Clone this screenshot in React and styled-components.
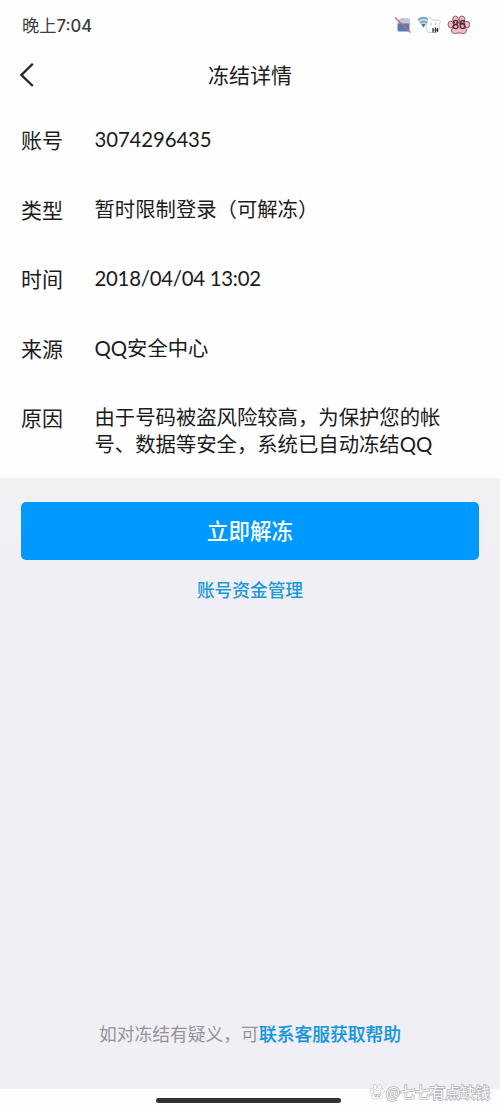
import React from "react";
import styled, { createGlobalStyle } from "styled-components";

const GlobalStyle = createGlobalStyle`
  * { box-sizing: border-box; }
  body {
    margin: 0;
    background: #fff;
    font-family: "Noto Sans CJK SC", sans-serif;
    color: #1b1b1b;
  }
`;

const Screen = styled.div`
  width: 500px;
  height: 1111px;
  display: flex;
  flex-direction: column;
  overflow: hidden;
  background: #fefefe;
`;

const StatusBar = styled.header`
  height: 50px;
  padding: 0 29px 0 22px;
  display: flex;
  align-items: center;
  justify-content: space-between;
`;

const Clock = styled.time`
  font-family: "Noto Sans CJK SC", sans-serif;
  font-size: 17.3px;
  font-weight: 400;
  line-height: 24px;
  color: #3c3c3c;
  white-space: nowrap;
`;

const ClockDigits = styled.span`
  font-family: "Inter", sans-serif;
  font-size: 16.6px;
  font-weight: 500;
`;

const StatusIcons = styled.div`
  display: flex;
  align-items: center;
  gap: 5px;
`;

const TitleBar = styled.nav`
  height: 50px;
  padding: 0 20px;
  display: grid;
  grid-template-columns: 30px 1fr 30px;
  align-items: center;
`;

const BackButton = styled.button`
  display: flex;
  padding: 0;
  border: 0;
  background: none;
`;

const Title = styled.h1`
  margin: 0;
  padding-bottom: 2px;
  text-align: center;
  font-size: 21px;
  font-weight: 400;
  line-height: 30px;
`;

const Details = styled.dl`
  margin: 0;
  padding: 24px 21px 20px;
  height: 378px;
  display: flex;
  flex-direction: column;
  gap: 39.5px;
`;

const DetailRow = styled.div`
  display: grid;
  grid-template-columns: 73.5px 1fr;
`;

const Label = styled.dt`
  font-size: 21px;
  line-height: 30px;
`;

const Value = styled.dd`
  margin: 0;
  padding-top: ${(p) => (p.$numeric ? "2px" : "1px")};
  font-family: ${(p) => (p.$numeric ? '"Lato", ' : "")}"Noto Sans CJK SC", sans-serif;
  font-size: 20.35px;
  line-height: 27px;
  letter-spacing: ${(p) => p.$spacing || "0"};
  white-space: nowrap;
`;

const Latin = styled.span`
  font-family: "Lato", sans-serif;
`;

const Actions = styled.main`
  flex: 1;
  display: flex;
  flex-direction: column;
  align-items: center;
  padding: 24px 21px 0;
  background: linear-gradient(#f1f1f2 0, #f1f1f3 24px, #f1eff6 82px);
`;

const PrimaryButton = styled.button`
  width: 100%;
  height: 58px;
  padding: 0 0 3px;
  border: 0;
  border-radius: 5px;
  background: #0099ff;
  color: #fff;
  font-family: inherit;
  font-size: 21.5px;
  font-weight: 500;
`;

const FundsLink = styled.a`
  margin-top: 16px;
  font-size: 17.7px;
  font-weight: 500;
  line-height: 26px;
  color: #1b98d8;
`;

const Help = styled.p`
  margin: auto 0 43px;
  font-size: 17.75px;
  line-height: 26px;
  color: #96949b;
  white-space: nowrap;
`;

const HelpLink = styled.a`
  font-weight: 500;
  -webkit-text-stroke: 0.2px currentColor;
  color: #1496dc;
`;

const GestureArea = styled.footer`
  position: relative;
  height: 22px;
  display: flex;
  justify-content: center;
  padding: 9px 3px 0 0;
`;

const HomeBar = styled.div`
  width: 185px;
  height: 5px;
  border-radius: 3px;
  background: #333;
`;

const Watermark = styled.div`
  position: absolute;
  right: 10px;
  bottom: 9px;
  display: flex;
  align-items: center;
  gap: 1px;
  font-size: 15px;
  line-height: 20px;
  color: #f8f7fa;
  -webkit-text-stroke: 1.8px #bcbbbf;
  paint-order: stroke fill;
  white-space: nowrap;
`;

const SimIcon = () => (
  <svg width="19" height="18" viewBox="0 0 19 18">
    <path d="M5 5l3-3h7q2 0 2 2v4H5z" fill="#c8c9cd" />
    <path d="M4.500 7.500h12v6.500q0 1.500-1.500 1.500H6q-1.500 0-1.500-1.500z" fill="#597baf" />
    <path d="M2 1.500l15.500 15" stroke="#b66c79" strokeWidth="1.300" />
  </svg>
);

const WifiIcon = () => (
  <svg width="25" height="20" viewBox="0 0 25 20">
    <path d="M1 5.500q5-4.500 10.500-.5L6.500 12z" fill="#cfe0ea" />
    <path d="M1 5q5.500-4.500 11 0M3 8q3.500-3 7 0" fill="none" stroke="#76a6c5" strokeWidth="1.800" />
    <path d="M4.500 9.500q2-1.500 4 0l-2 3z" fill="#2874ad" />
    <path d="M10.500 8q-.5-6 1.500-6 2 .5 3 3 2-.5 4 .5 2-1.500 4 0 1 2.500-1 4 1 3-.5 6l-2 2h-8q-3-2-2.500-5.500-.5-2 1.500-4z" fill="#fff" stroke="#c4c2c2" strokeWidth=".8" />
    <path d="M13.500 9h1.300M18 9h1.200" stroke="#777" />
    <path d="M16 13v4.500M18.500 12.500v5M15.500 15h2M18 15h3M20.500 13v4" stroke="#333" strokeWidth="1.200" />
  </svg>
);

const PawBattery = () => (
  <svg width="24" height="20" viewBox="0 0 24 20">
    <g fill="#f5bcc7" stroke="#8b5963" strokeWidth="1">
      <ellipse cx="3.800" cy="9.500" rx="2.700" ry="3.300" />
      <ellipse cx="8.500" cy="4.500" rx="2.800" ry="3.500" />
      <ellipse cx="15" cy="4.500" rx="2.800" ry="3.500" />
      <ellipse cx="20" cy="9.500" rx="2.700" ry="3.300" />
      <path d="M4.500 15q1-4 4.500-6.500 3-2 6 0 3.500 2.500 4.500 6.500-.5 4-4 3.500-3.500-1.500-7 0-4 .500-4-3.500z" />
    </g>
    <text x="12" y="14.200" textAnchor="middle" fontFamily="Liberation Sans, sans-serif" fontSize="12" fill="#3e2027" stroke="#3e2027" strokeWidth=".3">86</text>
  </svg>
);

const BackIcon = () => (
  <svg width="15" height="26" viewBox="0 0 15 26" fill="none">
    <path d="M12.800 1.800L1.500 13l11.300 11" stroke="#252525" strokeWidth="2.300" />
  </svg>
);

const PawLogo = () => (
  <svg width="16" height="16" viewBox="0 0 16 16" fill="#f8f7fa" stroke="#b9b8bc" strokeWidth="1">
    <ellipse cx="2.800" cy="7" rx="1.700" ry="2.200" />
    <ellipse cx="6" cy="3" rx="1.600" ry="2.200" />
    <ellipse cx="10.500" cy="3" rx="1.600" ry="2.200" />
    <ellipse cx="13.500" cy="7" rx="1.600" ry="2.200" />
    <path d="M8 6.500q2 0 3.500 3 2.500 2 1.500 4-1 2-5 1-4 1-5-1-1-2 1.500-4Q6 6.500 8 6.500z" />
    <path d="M6 10v2.500h1.500V10M9 10v2.500h2V10" fill="none" />
  </svg>
);

const details = [
  { label: "账号", value: "3074296435", numeric: true, spacing: "-0.1px" },
  { label: "类型", value: "暂时限制登录（可解冻）" },
  { label: "时间", value: "2018/04/04 13:02", numeric: true, spacing: "-0.25px" },
  { label: "来源", value: <><Latin>QQ</Latin>安全中心</> },
  { label: "原因", value: <>由于号码被盗风险较高，为保护您的帐<br />号、数据等安全，系统已自动冻结<Latin>QQ</Latin></> },
];

export default function App() {
  return (
    <>
      <GlobalStyle />
      <Screen>
        <StatusBar>
          <Clock>晚上<ClockDigits>7:04</ClockDigits></Clock>
          <StatusIcons>
            <SimIcon />
            <WifiIcon />
            <PawBattery />
          </StatusIcons>
        </StatusBar>
        <TitleBar>
          <BackButton aria-label="返回"><BackIcon /></BackButton>
          <Title>冻结详情</Title>
        </TitleBar>
        <Details>
          {details.map((d) => (
            <DetailRow key={d.label}>
              <Label>{d.label}</Label>
              <Value $numeric={d.numeric} $spacing={d.spacing}>{d.value}</Value>
            </DetailRow>
          ))}
        </Details>
        <Actions>
          <PrimaryButton>立即解冻</PrimaryButton>
          <FundsLink>账号资金管理</FundsLink>
          <Help>如对冻结有疑义，可<HelpLink>联系客服获取帮助</HelpLink></Help>
        </Actions>
        <GestureArea>
          <HomeBar />
          <Watermark><PawLogo />@七七有点缺钱</Watermark>
        </GestureArea>
      </Screen>
    </>
  );
}
